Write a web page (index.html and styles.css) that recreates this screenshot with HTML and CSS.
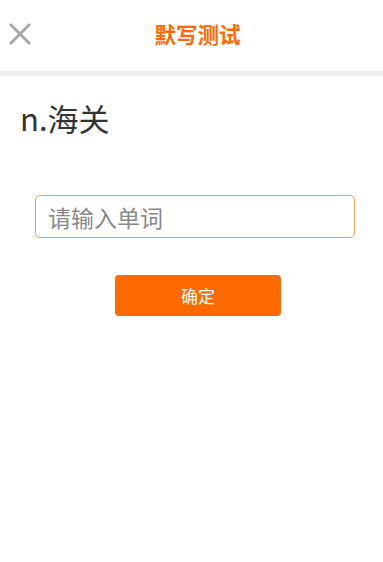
FILE: index.html
```html
<!DOCTYPE html>
<html lang="zh-CN">
<head>
  <meta charset="UTF-8">
  <meta name="viewport" content="width=device-width, initial-scale=1.0">
  <title>默写测试</title>
  <link rel="stylesheet" href="styles.css">
</head>
<body>
  <header class="topbar">
    <button type="button" class="close-btn" aria-label="关闭">
      <svg width="24" height="24" viewBox="0 0 24 24"><path d="M2 2 L22 22 M22 2 L2 22" stroke="#a8a8a8" stroke-width="3" fill="none"/></svg>
    </button>
    <h1 class="title">默写测试</h1>
  </header>
  <main class="content">
    <div class="word">n.海关</div>
    <form class="answer-form">
      <input type="text" class="answer-input" placeholder="请输入单词">
      <button type="submit" class="submit-btn">确定</button>
    </form>
  </main>
</body>
</html>
```

FILE: styles.css
```css
body { margin: 0; background: #fff; font-family: "Noto Sans CJK SC", "Noto Sans", sans-serif; }
.topbar { position: relative; height: 71px; display: flex; align-items: center; justify-content: center; border-bottom: 5px solid #eeeeee; }
.close-btn { position: absolute; left: 8px; top: 22px; background: none; border: none; padding: 0; width: 24px; height: 24px; cursor: pointer; }
.close-btn svg { display: block; }
.title { margin: -3px 0 0 12px; font-size: 21.5px; font-weight: bold; color: #ff6a00; line-height: 1; }
.content { padding: 0 20px; }
.word { margin-top: 22px; font-size: 31px; line-height: 40px; color: #333; }
.answer-form { margin-top: 57px; }
.answer-input { display: block; box-sizing: border-box; width: 320px; height: 43px; margin-left: 15px; border: 1px solid #ff9a50; border-radius: 5px; padding: 0 12px; font-size: 23px; font-family: inherit; color: #333; outline: none; }
.answer-input::placeholder { color: #888; }
.submit-btn { display: block; margin: 37px 0 0 95px; width: 166px; height: 41px; background: #ff6a00; color: #fff; border: none; border-radius: 4px; font-size: 17px; font-family: inherit; cursor: pointer; }
```
